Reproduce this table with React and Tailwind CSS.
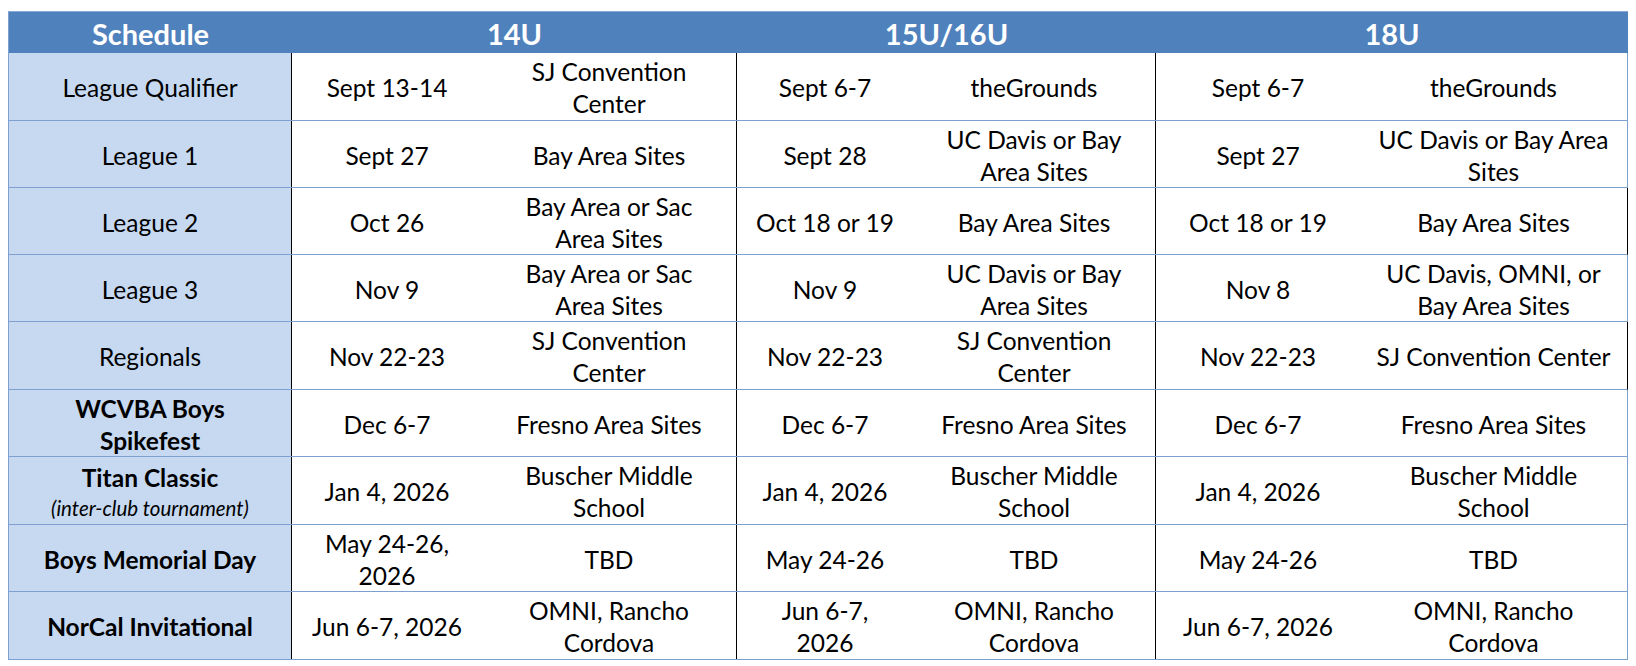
import React from "react";

const cols = "grid grid-rows-1 grid-cols-[283px_190px_255px_176px_243px_204px_267px]";

const rows = [
  { name: ["League Qualifier"], cells: [["Sept 13-14"], ["SJ Convention", "Center"], ["Sept 6-7"], ["theGrounds"], ["Sept 6-7"], ["theGrounds"]], h: "h-[68px]" },
  { name: ["League 1"], cells: [["Sept 27"], ["Bay Area Sites"], ["Sept 28"], ["UC Davis or Bay", "Area Sites"], ["Sept 27"], ["UC Davis or Bay Area", "Sites"]], h: "h-[67px]" },
  { name: ["League 2"], cells: [["Oct 26"], ["Bay Area or Sac", "Area Sites"], ["Oct 18 or 19"], ["Bay Area Sites"], ["Oct 18 or 19"], ["Bay Area Sites"]], h: "h-[67px]", dark: true },
  { name: ["League 3"], cells: [["Nov 9"], ["Bay Area or Sac", "Area Sites"], ["Nov 9"], ["UC Davis or Bay", "Area Sites"], ["Nov 8"], ["UC Davis, OMNI, or", "Bay Area Sites"]], h: "h-[67px]" },
  { name: ["Regionals"], cells: [["Nov 22-23"], ["SJ Convention", "Center"], ["Nov 22-23"], ["SJ Convention", "Center"], ["Nov 22-23"], ["SJ Convention Center"]], h: "h-[68px]", dark: true },
  { name: ["WCVBA Boys", "Spikefest"], bold: true, cells: [["Dec 6-7"], ["Fresno Area Sites"], ["Dec 6-7"], ["Fresno Area Sites"], ["Dec 6-7"], ["Fresno Area Sites"]], h: "h-[67px]" },
  { name: ["Titan Classic"], note: "(inter-club tournament)", bold: true, cells: [["Jan 4, 2026"], ["Buscher Middle", "School"], ["Jan 4, 2026"], ["Buscher Middle", "School"], ["Jan 4, 2026"], ["Buscher Middle", "School"]], h: "h-[68px]" },
  { name: ["Boys Memorial Day"], bold: true, cells: [["May 24-26,", "2026"], ["TBD"], ["May 24-26"], ["TBD"], ["May 24-26"], ["TBD"]], h: "h-[67px]" },
  { name: ["NorCal Invitational"], bold: true, cells: [["Jun 6-7, 2026"], ["OMNI, Rancho", "Cordova"], ["Jun 6-7,", "2026"], ["OMNI, Rancho", "Cordova"], ["Jun 6-7, 2026"], ["OMNI, Rancho", "Cordova"]], h: "h-[68px]" },
];

const Lines = ({ lines }) =>
  lines.map((l, i) => (
    <span key={i} className="block whitespace-nowrap">
      {l}
    </span>
  ));

export default function App() {
  return (
    <div className="bg-white min-h-screen pt-[11px] pl-[8px] font-['Lato','Carlito',sans-serif] text-black">
      <div className="w-[1620px] border-l border-[#7da0d0]">
        {/* Header */}
        <div className="grid grid-cols-[283px_445px_419px_472px] h-[42px] bg-[#4f81bd] text-white font-bold text-[29px] border-t border-[#8aaad6]">
          <div className="flex items-center justify-center">Schedule</div>
          <div className="flex items-center justify-center">14U</div>
          <div className="flex items-center justify-center">15U/16U</div>
          <div className="flex items-center justify-center">18U</div>
        </div>

        {rows.map((r, i) => (
          <div
            key={i}
            className={`${cols} ${r.h} border-b border-r border-b-[#7da0d0] ${r.dark ? "border-r-black" : "border-r-[#7da0d0]"} text-[24.5px] leading-[32px]`}
          >
            <div className={`bg-[#c6d9f1] border-r border-black flex flex-col items-center justify-center text-center pt-[3px] min-h-0 ${r.bold ? "font-bold" : ""}`}>
              <Lines lines={r.name} />
              {r.note && <span className="block italic font-normal text-[20.5px] leading-[28px]">{r.note}</span>}
            </div>
            {r.cells.map((c, j) => (
              <div
                key={j}
                className={`flex flex-col items-center justify-center text-center pt-[3px] min-h-0 ${j === 1 || j === 3 ? "border-r border-black" : ""}`}
              >
                <Lines lines={c} />
              </div>
            ))}
          </div>
        ))}
      </div>
    </div>
  );
}
